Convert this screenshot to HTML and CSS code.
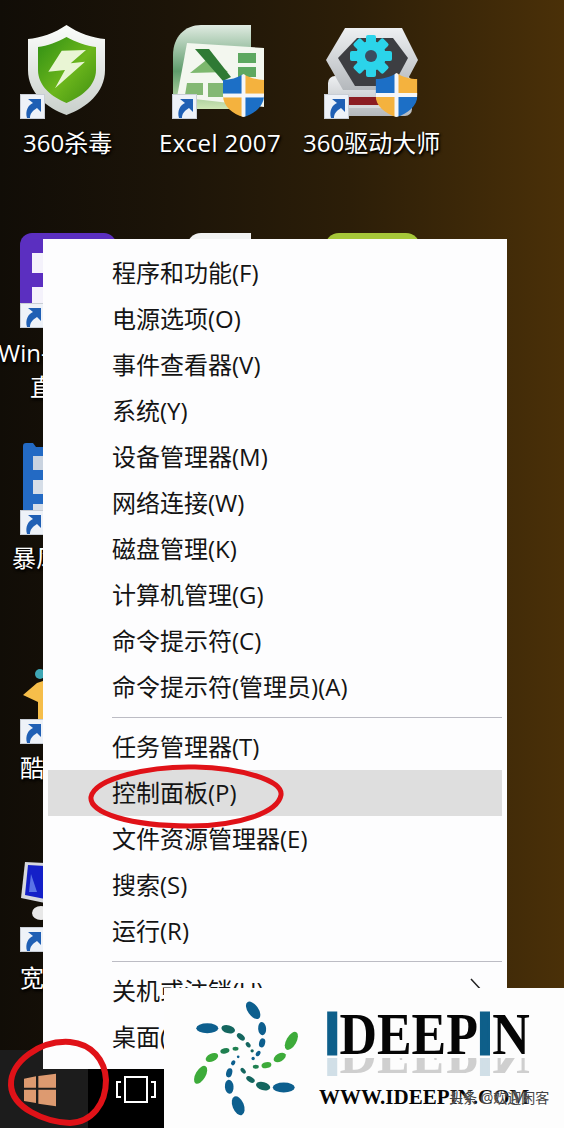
FILE: index.html
```html
<!DOCTYPE html>
<html lang="zh-CN">
<head>
<meta charset="utf-8">
<title>Win+X 菜单</title>
<link rel="stylesheet" href="styles.css">
</head>
<body>
<svg class="defs" width="0" height="0" aria-hidden="true">
  <defs>
    <linearGradient id="shieldRim" x1="0" y1="0" x2="0" y2="1"><stop offset="0" stop-color="#fbfdfb"/><stop offset="1" stop-color="#c9cfcb"/></linearGradient>
    <linearGradient id="shieldGreen" x1="0" y1="0" x2="1" y2="1"><stop offset="0" stop-color="#2f8f14"/><stop offset=".55" stop-color="#6cb61c"/><stop offset="1" stop-color="#3f8f10"/></linearGradient>
    <linearGradient id="xlBack" x1="0" y1="0" x2="0" y2="1"><stop offset="0" stop-color="#e0ebe2"/><stop offset=".55" stop-color="#5f9c6c"/><stop offset="1" stop-color="#cfe6b4"/></linearGradient>
    <linearGradient id="silver" x1="0" y1="0" x2="0" y2="1"><stop offset="0" stop-color="#eef0f2"/><stop offset="1" stop-color="#b4b8bc"/></linearGradient>
    <clipPath id="uacClip"><path d="M21 0C27 4 35 6 42 6V22C42 33 32 41 21 44C10 41 0 33 0 22V6C7 6 15 4 21 0Z"/></clipPath>
    <symbol id="uac" viewBox="0 0 42 44">
      <g clip-path="url(#uacClip)">
        <rect width="21" height="22" fill="#1c6fc6"/>
        <rect x="21" width="21" height="22" fill="#f4b23e"/>
        <rect y="22" width="21" height="22" fill="#f4b23e"/>
        <rect x="21" y="22" width="21" height="22" fill="#1c6fc6"/>
        <rect x="19" width="4" height="44" fill="#f4f6f8"/>
        <rect y="20" width="42" height="4" fill="#f4f6f8"/>
      </g>
    </symbol>
    <symbol id="shortcut" viewBox="0 0 25 25">
      <rect x=".5" y=".5" width="24" height="24" fill="#eef2f8" stroke="#c9ced6"/>
      <path d="M8 5H21V18L17 14C12 17 10 20 10 24H7C5 17 8 11 13 9Z" fill="#1f5fb4"/>
    </symbol>
  </defs>
</svg>

<main class="desktop">
  <div class="desk-icon d-shield">
    <svg class="art" width="77" height="90" viewBox="0 0 77 90">
      <path d="M38.5 0C50 8 65 13 77 14V45C77 68 58 83 38.5 90C19 83 0 68 0 45V14C12 13 27 8 38.5 0Z" fill="url(#shieldRim)"/>
      <path d="M38.5 12C47 17 59 21 68 22V45C68 61 53 72 38.5 78C24 72 10 61 10 45V22C19 21 30 17 38.5 12Z" fill="url(#shieldGreen)"/>
      <path d="M58 25L33.7 25.7L20.3 46.7L37 45L27 63.3L57 36.7L42.7 38.3Z" fill="#e9f5d4"/>
    </svg>
  </div>
  <svg class="arrow a1" width="25" height="25"><use href="#shortcut"/></svg>
  <div class="label l1">360杀毒</div>

  <div class="desk-icon d-excel">
    <svg class="art" width="91" height="92" viewBox="0 0 91 92">
      <path d="M78 0V84H0V30C0 12 12 0 28 0Z" fill="url(#xlBack)"/>
      <path d="M14 18L91 23V82L4 72Z" fill="#f3f7ef"/>
      <path d="M17 48L37 32L55 47Z" fill="#7db86e"/>
      <path d="M22 24H36L58 52L50 56Z" fill="#2f7a34"/>
      <path d="M65 28H83V38H65ZM65 42H83V52H65Z" fill="#5da860"/>
      <path d="M14 58H30V70H12ZM35 58H50V72H35Z" fill="#83b873"/>
    </svg>
    <svg class="badge b-excel" width="41" height="43"><use href="#uac"/></svg>
  </div>
  <svg class="arrow a2" width="25" height="25"><use href="#shortcut"/></svg>
  <div class="label l2">Excel 2007</div>

  <div class="desk-icon d-driver">
    <svg class="art" width="92" height="90" viewBox="0 0 92 90">
      <rect x="2" y="48" width="84" height="40" rx="7" fill="url(#silver)"/>
      <rect x="22" y="69" width="34" height="8" fill="#8c1d22"/>
      <rect x="22" y="77" width="34" height="3" fill="#d7d9dc"/>
      <path d="M19 0H76L92 32L76 62H17L0 32Z" fill="url(#silver)"/>
      <path d="M31 10H67L82 30L67 58H29L12 30Z" fill="#3d3e42"/>
      <g fill="#2bd4ea">
        <circle cx="45" cy="28" r="15"/>
        <rect x="40" y="7" width="10" height="42" rx="2"/>
        <rect x="40" y="7" width="10" height="42" rx="2" transform="rotate(45 45 28)"/>
        <rect x="40" y="7" width="10" height="42" rx="2" transform="rotate(90 45 28)"/>
        <rect x="40" y="7" width="10" height="42" rx="2" transform="rotate(135 45 28)"/>
      </g>
      <circle cx="45" cy="28" r="6" fill="#3a4c60"/>
    </svg>
    <svg class="badge b-driver" width="43" height="44"><use href="#uac"/></svg>
  </div>
  <svg class="arrow a3" width="25" height="25"><use href="#shortcut"/></svg>
  <div class="label l3">360驱动大师</div>

  <div class="peek p-purple"><i class="glyph g1"></i><i class="glyph g2"></i></div>
  <div class="peek p-white"></div>
  <div class="peek p-lime"></div>
  <svg class="arrow a4" width="25" height="25"><use href="#shortcut"/></svg>
  <div class="label l4">Win-</div>
  <div class="label l5">直</div>

  <svg class="hidden-art h-blue" width="21" height="68" viewBox="0 0 21 68">
    <path d="M0 3Q0 0 3 0H10L13 4H21V68H0Z" fill="#236ac4"/>
    <rect x="10" y="13" width="11" height="14" fill="#c9d3e0"/>
    <rect x="10" y="37" width="11" height="14" fill="#d6dee8"/>
    <rect x="10" y="61" width="11" height="7" fill="#d6dee8"/>
  </svg>
  <svg class="arrow a5" width="25" height="25"><use href="#shortcut"/></svg>
  <div class="label l6">暴风</div>

  <svg class="hidden-art h-yellow" width="22" height="53" viewBox="0 0 22 53">
    <circle cx="17" cy="7" r="5" fill="#3fa7b5"/>
    <path d="M14 16L20 14V53H15V35L0 28Z" fill="#f6be4a"/>
  </svg>
  <svg class="arrow a6" width="25" height="25"><use href="#shortcut"/></svg>
  <div class="label l7">酷</div>

  <svg class="hidden-art h-monitor" width="24" height="62" viewBox="0 0 24 62">
    <path d="M4 0L24 1V41L0 36Z" fill="#d6d8de"/>
    <path d="M7 3L24 4V37L4 33Z" fill="#1420c8"/>
    <path d="M10 12L16 30L8 30Z" fill="#5a74e6"/>
    <ellipse cx="20" cy="51" rx="9" ry="7" fill="#e8e8e8"/>
  </svg>
  <svg class="arrow a7" width="25" height="25"><use href="#shortcut"/></svg>
  <div class="label l8">宽</div>

  <footer class="taskbar">
    <div class="start">
      <svg class="win" width="34" height="34" viewBox="70 368 100 102">
        <path d="M72 385L108 378V412H72ZM115 377L168 370V412H115ZM72 418H108V458L72 452ZM115 418H168V468L115 460Z" fill="#dd9a70"/>
      </svg>
    </div>
    <div class="taskview">
      <svg width="40" height="30" viewBox="0 0 40 30" fill="none" stroke="#fff" stroke-width="2">
        <rect x="9" y="2" width="22" height="25"/>
        <path d="M5 7H1V22H5M35 7H39V22H35"/>
      </svg>
    </div>
  </footer>

  <nav class="menu">
    <div class="item">程序和功能(F)</div>
    <div class="item">电源选项(O)</div>
    <div class="item">事件查看器(V)</div>
    <div class="item">系统(Y)</div>
    <div class="item">设备管理器(M)</div>
    <div class="item">网络连接(W)</div>
    <div class="item">磁盘管理(K)</div>
    <div class="item">计算机管理(G)</div>
    <div class="item">命令提示符(C)</div>
    <div class="item">命令提示符(管理员)(A)</div>
    <div class="sep"></div>
    <div class="item">任务管理器(T)</div>
    <div class="item active">控制面板(P)</div>
    <div class="item">文件资源管理器(E)</div>
    <div class="item">搜索(S)</div>
    <div class="item">运行(R)</div>
    <div class="sep"></div>
    <div class="item">关机或注销(U)
      <svg class="chev" width="14" height="28" viewBox="0 0 14 28" fill="none" stroke="#222" stroke-width="1.5"><path d="M1 1L13 14L1 27"/></svg>
    </div>
    <div class="item">桌面(D)</div>
  </nav>

  <aside class="logo">
    <svg class="spiral" width="113" height="123" viewBox="570 140 340 370">
      <g fill="#0d5f8e">
        <ellipse cx="760" cy="180" rx="30" ry="16" transform="rotate(55 760 180)"/>
        <ellipse cx="787" cy="235" rx="20" ry="12" transform="rotate(85 787 235)"/>
        <ellipse cx="787" cy="278" rx="14" ry="9" transform="rotate(105 787 278)"/>
        <ellipse cx="775" cy="310" rx="9" ry="6" transform="rotate(125 775 310)"/>
        <circle cx="760" cy="325" r="5"/>
        <ellipse cx="715" cy="467" rx="30" ry="17" transform="rotate(68 715 467)"/>
        <ellipse cx="688" cy="410" rx="21" ry="13" transform="rotate(85 688 410)"/>
        <ellipse cx="688" cy="368" rx="14" ry="9" transform="rotate(105 688 368)"/>
        <ellipse cx="700" cy="338" rx="8" ry="6" transform="rotate(120 700 338)"/>
        <circle cx="715" cy="320" r="4"/>
      </g>
      <g fill="#14665f">
        <ellipse cx="852" cy="412" rx="33" ry="15" fill="#0d5f8e"/>
        <ellipse cx="790" cy="408" rx="22" ry="12" transform="rotate(15 790 408)"/>
        <ellipse cx="752" cy="388" rx="14" ry="8" transform="rotate(30 752 388)"/>
        <ellipse cx="730" cy="362" rx="10" ry="6" transform="rotate(50 730 362)"/>
        <ellipse cx="622" cy="234" rx="33" ry="15" fill="#0d5f8e"/>
        <ellipse cx="685" cy="237" rx="21" ry="12" transform="rotate(15 685 237)"/>
        <ellipse cx="723" cy="260" rx="14" ry="8" transform="rotate(40 723 260)"/>
        <ellipse cx="745" cy="284" rx="9" ry="6" transform="rotate(50 745 284)"/>
        <circle cx="757" cy="302" r="5"/>
      </g>
      <g fill="#3dab3a">
        <ellipse cx="875" cy="272" rx="30" ry="15" transform="rotate(-60 875 272)"/>
        <ellipse cx="840" cy="322" rx="20" ry="12" transform="rotate(-30 840 322)"/>
        <ellipse cx="800" cy="345" rx="15" ry="9" transform="rotate(-10 800 345)"/>
        <ellipse cx="768" cy="350" rx="9" ry="6" fill="#1f8050"/>
        <ellipse cx="602" cy="374" rx="30" ry="15" transform="rotate(-60 602 374)"/>
        <ellipse cx="636" cy="322" rx="20" ry="12" transform="rotate(-25 636 322)"/>
        <ellipse cx="675" cy="302" rx="14" ry="8" transform="rotate(-15 675 302)" fill="#1f8050"/>
        <ellipse cx="707" cy="296" rx="9" ry="6" fill="#1f8050"/>
      </g>
    </svg>
    <div class="brand">
      <div class="wordmark"><b class="blue">I</b>DEEP<b class="blue">I</b>N</div>
      <div class="reflect" aria-hidden="true"><div class="wordmark"><b class="blue">I</b>DEEP<b class="blue">I</b>N</div></div>
      <div class="url">WWW.IDEEPIN.COM</div>
    </div>
    <div class="watermark">头条 @欢迎闲客</div>
  </aside>

  <svg class="marks" width="564" height="1128" viewBox="0 0 564 1128" fill="none" stroke="#e01218" aria-hidden="true">
    <path d="M281 795C283 780 240 768 195 767C150 766 95 778 91 797C89 813 130 826 190 826C240 826 278 812 281 795Z" stroke-width="5"/>
    <path d="M70 1042C40 1040 10 1062 11 1085C12 1108 45 1122 70 1123C92 1122 106 1104 106 1080C105 1060 92 1044 70 1042Z" stroke-width="6"/>
  </svg>
</main>
</body>
</html>
```
FILE: styles.css
```css
* { box-sizing: border-box; }
html, body { margin: 0; padding: 0; }
body { width: 564px; height: 1128px; overflow: hidden; background: #120d07; }
.defs { position: absolute; }

.desktop {
  position: relative;
  width: 564px;
  height: 1128px;
  overflow: hidden;
  background: linear-gradient(90deg, #110d07 0%, #1c1408 30%, #2c1e08 62%, #4a3008 100%);
  font-family: "Open Sans", "Noto Sans CJK SC", sans-serif;
}

/* free canvas: desktop icons */
.desk-icon, .arrow, .label, .peek, .hidden-art { position: absolute; }
.art { display: block; filter: blur(.5px); }
.badge { position: absolute; }
.d-shield { left: 28px; top: 25px; }
.d-excel { left: 173px; top: 25px; }
.d-driver { left: 326px; top: 28px; }
.b-excel { left: 50px; top: 49px; }
.b-driver { left: 49px; top: 45px; }

.a1 { left: 20px; top: 94px; }
.a2 { left: 172px; top: 94px; }
.a3 { left: 324px; top: 94px; }
.a4 { left: 20px; top: 303px; }
.a5 { left: 20px; top: 510px; }
.a6 { left: 20px; top: 719px; }
.a7 { left: 20px; top: 927px; }

.label {
  color: #fff;
  font-size: 24px;
  line-height: 32px;
  white-space: nowrap;
  text-shadow: 1px 1px 2px #000, 1px 2px 3px #000;
}
.l1 { left: 23px; top: 127px; }
.l2 { left: 159px; top: 127px; letter-spacing: .4px; }
.l3 { left: 303px; top: 127px; }
.l4 { left: -2px; top: 337px; }
.l5 { left: 30px; top: 371px; }
.l6 { left: 12px; top: 542px; }
.l7 { left: 20px; top: 752px; }
.l8 { left: 20px; top: 962px; }

.peek { top: 233px; height: 70px; }
.p-purple { left: 20px; width: 96px; border-radius: 12px 12px 0 0; background: #5b2fc0; }
.p-white { left: 187px; width: 64px; border-radius: 14px 0 0 0; background: #f1f2f2; }
.p-lime { left: 325px; width: 95px; border-radius: 14px 14px 0 0; background: #a6c739; }
.glyph { position: absolute; left: 12px; width: 12px; background: #f4f2fb; }
.g1 { top: 20px; height: 20px; }
.g2 { top: 54px; height: 16px; }

.h-blue { left: 23px; top: 443px; }
.h-yellow { left: 23px; top: 667px; }
.h-monitor { left: 21px; top: 862px; }

/* taskbar */
.taskbar {
  position: absolute;
  left: 0;
  top: 1050px;
  width: 164px;
  height: 78px;
  display: flex;
}
.start { width: 88px; background: #1c1c1c; padding: 23px 0 0 23px; }
.win { display: block; }
.taskview { width: 76px; background: #000; padding: 25px 0 0 28px; }
.taskview svg { display: block; }

/* context menu */
.menu {
  position: absolute;
  left: 43px;
  top: 239px;
  width: 464px;
  padding: 11px 0 9px;
  background: #fdfdfe;
  color: #141414;
  font-size: 24px;
}
.item {
  display: flex;
  align-items: center;
  justify-content: space-between;
  height: 46px;
  margin: 0 5px;
  padding: 0 18px 4px 64px;
  white-space: nowrap;
}
.item.active { background: #dedede; }
.chev { display: block; margin-top: 6px; }
.sep { height: 1px; margin: 7px 5px 6px 69px; background: #bcbcc4; }

/* watermark logo */
.logo {
  position: absolute;
  left: 164px;
  top: 988px;
  width: 400px;
  height: 140px;
  display: flex;
  align-items: flex-start;
  background: #fdfdfd;
  padding: 9px 0 0 26px;
}
.spiral { display: block; flex: none; }
.brand { flex: none; margin-left: 16px; padding-top: 15px; width: 240px; }
.wordmark {
  font: bold 60px/44px "Liberation Serif", serif;
  color: #050505;
  width: 237px;
  transform: scaleX(.865);
  transform-origin: left center;
  margin-left: 6px;
  white-space: nowrap;
}
.blue {
  font-family: "Liberation Sans", sans-serif;
  color: #0e5f8a;
  -webkit-text-stroke: 3px #0e5f8a;
}
.reflect {
  height: 18px;
  overflow: hidden;
  opacity: .18;
  transform: scaleY(-1);
  margin-top: 2px;
}
.url {
  margin-top: 9px;
  font: bold 21px/24px "Liberation Serif", serif;
  color: #050505;
  white-space: nowrap;
}
.watermark {
  position: absolute;
  left: 285px;
  top: 100px;
  font-size: 14px;
  line-height: 20px;
  color: #444;
  white-space: nowrap;
  text-shadow: 0 0 2px #fff;
}

.marks { position: absolute; left: 0; top: 0; pointer-events: none; }
```
